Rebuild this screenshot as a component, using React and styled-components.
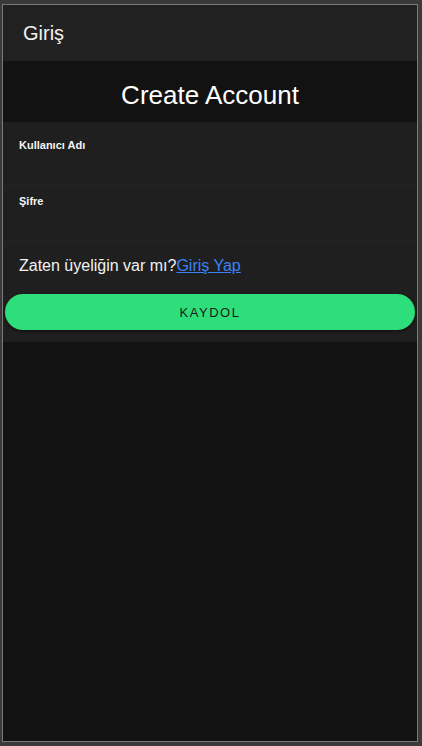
import React from 'react'
import styled, { createGlobalStyle } from 'styled-components'

const GlobalStyle = createGlobalStyle`
  html, body {
    margin: 0;
    padding: 0;
    background: #3a3a3a;
    font-family: "Liberation Sans", Arial, sans-serif;
  }
  * { box-sizing: border-box; }
`

const Screen = styled.div`
  margin: 4px 4px 4px 2px;
  height: 738px;
  border: 1px solid #7a7a7a;
  background: #121212;
  display: flex;
  flex-direction: column;
`

const TopBar = styled.header`
  height: 56px;
  background: #212121;
  display: flex;
  align-items: center;
  padding-left: 20px;
  color: #f2f2f2;
  font-size: 20px;
`

const TitleBand = styled.div`
  height: 61px;
  padding-top: 8px;
  display: flex;
  align-items: center;
  justify-content: center;
  color: #fff;
  font-size: 26px;
`

const Panel = styled.form`
  background: #1f1f1f;
  padding: 8px 2px 12px;
  display: flex;
  flex-direction: column;
`

const Field = styled.label`
  display: flex;
  flex-direction: column;
  height: ${p => p.h}px;
  padding: 9px 14px 0;
  border-bottom: 1px solid #242424;
`

const FieldLabel = styled.span`
  color: #f4f4f4;
  font-size: 11px;
  font-weight: bold;
`

const Input = styled.input`
  background: transparent;
  border: none;
  outline: none;
  color: #fff;
  font-size: 14px;
  margin-top: 6px;
`

const Prompt = styled.p`
  margin: 15px 14px 0;
  color: #f2f2f2;
  font-size: 16px;

  a {
    color: #3b82f6;
    text-decoration: underline;
  }
`

const Button = styled.button`
  margin-top: 19px;
  height: 36px;
  border: none;
  border-radius: 18px;
  background: #2ede7a;
  color: #1a1a1a;
  font-family: inherit;
  font-size: 13px;
  letter-spacing: 1.5px;
  box-shadow: 0 2px 3px rgba(0, 0, 0, 0.4);
`

export default function App() {
  return (
    <>
      <GlobalStyle />
      <Screen>
        <TopBar>Giriş</TopBar>
        <TitleBand>Create Account</TitleBand>
        <Panel onSubmit={e => e.preventDefault()}>
          <Field h={56}>
            <FieldLabel>Kullanıcı Adı</FieldLabel>
            <Input type="text" />
          </Field>
          <Field h={56}>
            <FieldLabel>Şifre</FieldLabel>
            <Input type="password" />
          </Field>
          <Prompt>
            Zaten üyeliğin var mı?<a href="#">Giriş Yap</a>
          </Prompt>
          <Button type="submit">KAYDOL</Button>
        </Panel>
      </Screen>
    </>
  )
}
